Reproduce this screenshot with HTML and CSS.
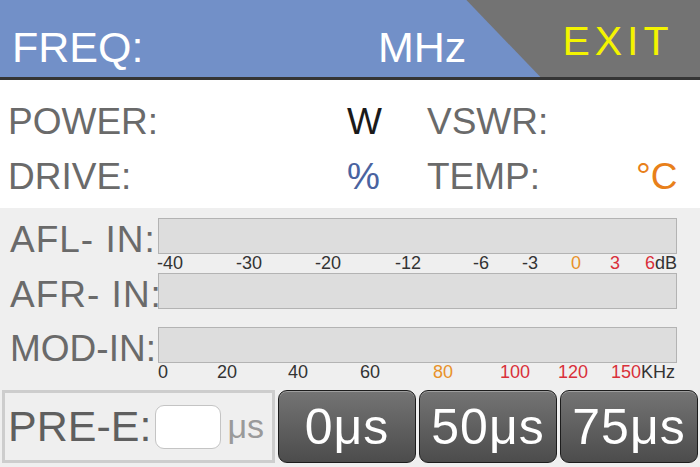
FILE: index.html
```html
<!DOCTYPE html>
<html>
<head>
  <title>Transmitter</title>
  <link rel="stylesheet" href="styles.css">
</head>
<body>
  <div class="screen">
    <header class="top-bar">
      <div class="freq">
        <span class="freq-label">FREQ:</span>
        <span class="freq-unit">MHz</span>
      </div>
      <div class="exit">EXIT</div>
    </header>

    <section class="readouts">
      <span class="label">POWER:</span>
      <span class="value power">W</span>
      <span class="label">VSWR:</span>
      <span class="value"></span>

      <span class="label">DRIVE:</span>
      <span class="value drive">%</span>
      <span class="label">TEMP:</span>
      <span class="value temp">°C</span>
    </section>

    <section class="lower">
      <div class="meters">
        <div class="meter-row">
          <span class="meter-label wide">AFL- IN:</span>
          <div class="bar"></div>
        </div>
        <div class="scale">
          <span style="left:-1px">-40</span>
          <span style="left:78px">-30</span>
          <span style="left:157px">-20</span>
          <span style="left:237px">-12</span>
          <span style="left:315px">-6</span>
          <span style="left:364px">-3</span>
          <span class="warn" style="left:413px">0</span>
          <span class="hot" style="left:452px">3</span>
          <span style="left:487px"><span class="hot">6</span>dB</span>
        </div>
        <div class="meter-row">
          <span class="meter-label wide">AFR- IN:</span>
          <div class="bar"></div>
        </div>
        <div class="meter-row spaced">
          <span class="meter-label">MOD-IN:</span>
          <div class="bar"></div>
        </div>
        <div class="scale">
          <span style="left:0">0</span>
          <span style="left:59px">20</span>
          <span style="left:130px">40</span>
          <span style="left:202px">60</span>
          <span class="warn" style="left:275px">80</span>
          <span class="hot" style="left:342px">100</span>
          <span class="hot" style="left:400px">120</span>
          <span style="left:453px"><span class="hot">150</span>KHz</span>
        </div>
      </div>

      <div class="bottom-row">
        <div class="pre-e">
          <span class="pre-label">PRE-E:</span>
          <div class="pre-input"></div>
          <span class="pre-unit">μs</span>
        </div>
        <button class="pre-btn">0μs</button>
        <button class="pre-btn">50μs</button>
        <button class="pre-btn">75μs</button>
      </div>
    </section>
  </div>
</body>
</html>
```

FILE: styles.css
```css
body {
  margin: 0;
  background-color: #efefef;
  font-family: "Liberation Sans", Arial, sans-serif;
}

.screen {
  width: 700px;
  height: 467px;
  overflow: hidden;
  display: flex;
  flex-direction: column;
}

/* barra superior */
.top-bar {
  display: flex;
  height: 77px;
  background-color: #7290c8;
  border-bottom: 3px solid #353535;
  color: #ffffff;
}

.freq {
  flex: 1;
  display: flex;
  padding: 26px 0 0 12px;
  font-size: 43px;
  line-height: 1;
}

.freq-label {
  width: 366px;
}

.exit {
  width: 234px;
  box-sizing: border-box;
  padding: 21px 0 0 96px;
  background-color: #737373;
  clip-path: polygon(0 0, 100% 0, 100% 100%, 74px 100%);
  color: #f4f400;
  font-size: 41px;
  line-height: 1;
  letter-spacing: 5px;
}

/* lecturas */
.readouts {
  display: grid;
  grid-template-columns: 339px 80px 209px auto;
  row-gap: 18px;
  padding: 23px 0 13px 8px;
  background-color: #ffffff;
  font-size: 37px;
  line-height: 37px;
  color: #6a6a6a;
}

.power {
  color: #1a1a1a;
}

.drive {
  color: #4a63a0;
}

.temp {
  color: #e8801a;
}

/* medidores */
.lower {
  flex: 1;
  background-color: #efefef;
}

.meters {
  padding: 10px 23px 0 0;
}

.meter-row {
  display: flex;
  height: 36px;
}

.meter-row.spaced {
  margin-top: 18px;
}

.meter-label {
  width: 158px;
  box-sizing: border-box;
  padding: 8px 0 0 10px;
  font-size: 37px;
  line-height: 28px;
  color: #6a6a6a;
  white-space: nowrap;
}

.meter-label.wide {
  letter-spacing: 1px;
}

.bar {
  flex: 1;
  background-color: #dddddd;
  border: 1px solid #b3b3b3;
}

.scale {
  position: relative;
  height: 19px;
  margin-left: 158px;
  font-size: 18px;
  line-height: 19px;
  color: #333333;
}

.scale > span {
  position: absolute;
  top: 0;
  white-space: nowrap;
}

.warn {
  color: #e8922a;
}

.hot {
  color: #d9303a;
}

/* fila inferior */
.bottom-row {
  display: flex;
  gap: 3px;
  height: 73px;
  margin-top: 8px;
  padding: 0 2px 0 2px;
}

.pre-e {
  width: 273px;
  box-sizing: border-box;
  display: flex;
  align-items: center;
  padding-left: 3px;
  border: 3px solid #cdcdcd;
}

.pre-label {
  font-size: 43px;
  color: #5f5f5f;
}

.pre-input {
  width: 66px;
  height: 44px;
  box-sizing: border-box;
  margin-left: 4px;
  background-color: #ffffff;
  border: 1px solid #c4c4c4;
  border-radius: 9px;
}

.pre-unit {
  margin-left: 6px;
  font-size: 34px;
  color: #9a9a9a;
}

.pre-btn {
  flex: 1;
  padding: 0;
  background: linear-gradient(#747474, #4c4c4c);
  border: 1.5px solid #1c1c1c;
  border-radius: 9px;
  box-shadow: inset 0 1px 0 rgba(255, 255, 255, 0.3);
  color: #ffffff;
  font-family: "Liberation Sans", Arial, sans-serif;
  font-size: 50px;
  line-height: 1;
  letter-spacing: 1px;
}
```
